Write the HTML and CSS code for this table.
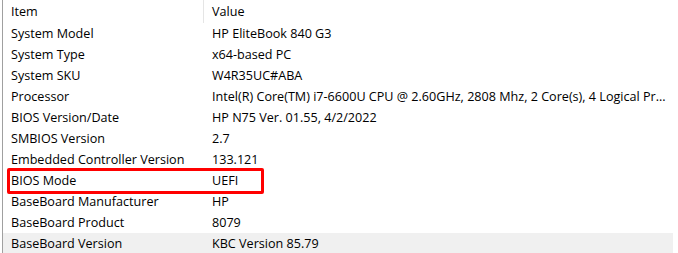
FILE: index.html
```html
<!DOCTYPE html>
<html>
<head>
<meta charset="utf-8">
<link rel="stylesheet" href="styles.css">
</head>
<body>
<div class="list">
  <div class="header">
    <div class="hcell col-item">Item</div>
    <div class="hcell col-value">Value</div>
  </div>
  <div class="row"><div class="cell col-item">System Model</div><div class="cell col-value">HP EliteBook 840 G3</div></div>
  <div class="row"><div class="cell col-item">System Type</div><div class="cell col-value">x64-based PC</div></div>
  <div class="row"><div class="cell col-item">System SKU</div><div class="cell col-value">W4R35UC#ABA</div></div>
  <div class="row"><div class="cell col-item">Processor</div><div class="cell col-value">Intel(R) Core(TM) i7-6600U CPU @ 2.60GHz, 2808 Mhz, 2 Core(s), 4 Logical Pr...</div></div>
  <div class="row"><div class="cell col-item">BIOS Version/Date</div><div class="cell col-value">HP N75 Ver. 01.55, 4/2/2022</div></div>
  <div class="row"><div class="cell col-item">SMBIOS Version</div><div class="cell col-value">2.7</div></div>
  <div class="row"><div class="cell col-item">Embedded Controller Version</div><div class="cell col-value">133.121</div></div>
  <div class="row highlight"><div class="cell col-item">BIOS Mode</div><div class="cell col-value">UEFI</div><div class="mark"></div></div>
  <div class="row"><div class="cell col-item">BaseBoard Manufacturer</div><div class="cell col-value">HP</div></div>
  <div class="row"><div class="cell col-item">BaseBoard Product</div><div class="cell col-value">8079</div></div>
  <div class="row selected"><div class="cell col-item">BaseBoard Version</div><div class="cell col-value">KBC Version 85.79</div></div>
</div>
</body>
</html>
```
FILE: styles.css
```css
html, body {
  margin: 0;
  padding: 0;
  background: #ffffff;
  overflow: hidden;
}
.list {
  width: 670px;
  margin-left: 2px;
  border-left: 1px solid #a0a0a0;
  height: 253px;
  font-family: "Open Sans", "Noto Sans", sans-serif;
  font-size: 12.6px;
  color: #000;
}
.header {
  display: flex;
  height: 23px;
  align-items: center;
}
.hcell {
  height: 23px;
  line-height: 23px;
  box-sizing: border-box;
}
.header .col-item {
  border-right: 1px solid #e5e5e5;
}
.row {
  display: flex;
  height: 21px;
  align-items: center;
  position: relative;
}
.cell, .hcell {
  white-space: nowrap;
  overflow: hidden;
}
.col-item {
  width: 201px;
  padding-left: 8px;
  box-sizing: border-box;
  flex: none;
}
.col-value {
  flex: 1;
  padding-left: 8px;
  min-width: 0;
}
.row.selected {
  background: #f0f0f0;
}
.mark {
  position: absolute;
  left: 4px;
  top: -2px;
  width: 257px;
  height: 26px;
  box-sizing: border-box;
  border: 3px solid #ff0000;
  border-radius: 2px;
}
```
